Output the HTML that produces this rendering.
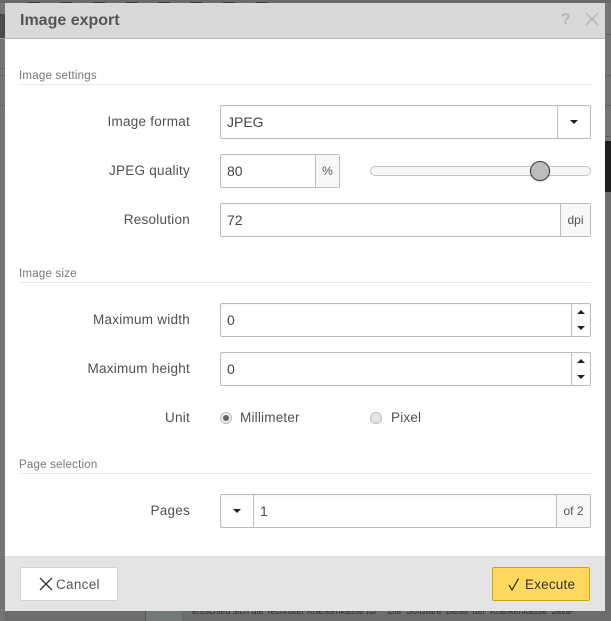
<!DOCTYPE html>
<html><head><meta charset="utf-8"><style>
html,body{margin:0;padding:0}
body{width:611px;height:621px;overflow:hidden;position:relative;background:#6b6d6c;font-family:"Liberation Sans",sans-serif;color:#4a4a4a;font-size:13.5px}
.a{position:absolute}
.t{position:absolute;white-space:nowrap;line-height:16px;letter-spacing:.2px}
.lab{position:absolute;right:421px;white-space:nowrap;line-height:16px;color:#505050;font-size:13.5px;letter-spacing:.25px}
.sec{position:absolute;left:19px;width:572px;height:16px;border-bottom:1px solid #e8e8e8;color:#777;font-size:11.5px;line-height:16px;letter-spacing:.22px}
.f{position:absolute;box-sizing:border-box;border:1px solid #bdbdbd;border-radius:2px;height:34px;background:#fff;box-shadow:inset 0 1px 2px rgba(0,0,0,.05)}
.s{position:absolute;top:0;bottom:0;width:0;border-left:1px solid #bdbdbd}
.add{position:absolute;top:0;bottom:0;background:#f7f7f7;border-left:1px solid #bdbdbd;color:#555;font-size:12px;line-height:32px;text-align:center}
.v{position:absolute;left:6px;top:8px;line-height:16px;color:#444;font-size:14px}
.dn{position:absolute;width:0;height:0;border-left:4px solid transparent;border-right:4px solid transparent;border-top:4px solid #222}
.up{position:absolute;width:0;height:0;border-left:4px solid transparent;border-right:4px solid transparent;border-bottom:4px solid #222}
</style></head><body>
<div class="a" style="left:0;top:0;width:611px;height:3px;background:#6a6a6a"></div>
<div class="a" style="left:28px;top:2px;width:245px;height:1px;background:repeating-linear-gradient(90deg,#3a3a3a 0 12px,transparent 12px 32.5px)"></div>
<div class="a" style="left:0;top:3px;width:5px;height:11px;background:#757575"></div>
<div class="a" style="left:0;top:14px;width:5px;height:24px;background:#4b4b4b"></div>
<div class="a" style="left:0;top:38px;width:5px;height:583px;background:#757575"></div>
<div class="a" style="left:0;top:38px;width:5px;height:1px;background:#9a9a9a"></div>
<div class="a" style="left:0;top:68px;width:5px;height:1px;background:#5f5f5f"></div>
<div class="a" style="left:0;top:75px;width:5px;height:1px;background:#5f5f5f"></div>
<div class="a" style="left:0;top:105px;width:5px;height:1px;background:#5f5f5f"></div>
<div class="a" style="left:605px;top:3px;width:6px;height:138px;background:#757575"></div>
<div class="a" style="left:605px;top:34px;width:6px;height:1px;background:#606060"></div>
<div class="a" style="left:605px;top:75px;width:6px;height:1px;background:#606060"></div>
<div class="a" style="left:605px;top:105px;width:6px;height:1px;background:#606060"></div>
<div class="a" style="left:605px;top:136px;width:6px;height:1px;background:#606060"></div>
<div class="a" style="left:605px;top:141px;width:6px;height:51px;background:#1d1e20"></div>
<div class="a" style="left:605px;top:192px;width:6px;height:429px;background:#6c6e6d"></div>
<div class="a" style="left:145px;top:605px;width:37px;height:16px;background:#747a79;border-left:1px solid #555;box-sizing:border-box"></div>
<div class="t" style="left:192px;top:605px;font-size:9px;color:#2c2c2c;line-height:12px;letter-spacing:0">entschied sich die Techniker Krankenkasse für</div>
<div class="t" style="left:388px;top:605px;font-size:9px;color:#2c2c2c;line-height:12px;letter-spacing:0;word-spacing:2px">Die Software bietet der Krankenkasse Java-</div>

<div class="a" style="left:5px;top:3px;width:600px;height:608px;background:#fff;overflow:hidden">
  <div class="a" style="left:0;top:0;width:600px;height:35px;background:#d9d9d9;border-bottom:1px solid #b9b9b9"></div>
  <div class="t" style="left:15px;top:10px;font-size:16px;font-weight:bold;color:#555;letter-spacing:0">Image export</div>
  <div class="t" style="left:556px;top:9px;font-size:16px;font-weight:bold;color:#b5b5b5;letter-spacing:0">?</div>
  <svg class="a" style="left:579px;top:8px" width="16" height="16" viewBox="0 0 16 16"><path d="M2 2L14 14M14 2L2 14" stroke="#b5b5b5" stroke-width="1.3" fill="none"/></svg>
  <div class="a" style="left:0;top:553px;width:600px;height:55px;background:#e4e4e4;border-top:1px solid #dcdcdc;box-sizing:border-box"></div>
</div>

<div class="sec" style="top:68px">Image settings</div>
<div class="sec" style="top:266px">Image size</div>
<div class="sec" style="top:457px">Page selection</div>

<div class="lab" style="top:114px">Image format</div>
<div class="f" style="left:220px;top:105px;width:371px"><div class="v">JPEG</div><div class="s" style="left:336px"></div><div class="dn" style="left:349px;top:14px"></div></div>

<div class="lab" style="top:163px">JPEG quality</div>
<div class="f" style="left:220px;top:154px;width:120px"><div class="v">80</div><div class="add" style="left:94px;right:0">%</div></div>
<div class="a" style="left:370px;top:166px;width:221px;height:10px;box-sizing:border-box;border:1px solid #c4c4c4;border-radius:5px;background:#f7f7f7"></div>
<div class="a" style="left:530px;top:161px;width:20px;height:20px;box-sizing:border-box;border:1px solid #3a3a3a;border-radius:50%;background:#bdbdbd;box-shadow:0 1px 2px rgba(0,0,0,.15)"></div>

<div class="lab" style="top:212px">Resolution</div>
<div class="f" style="left:220px;top:203px;width:371px"><div class="v">72</div><div class="add" style="left:339px;right:0">dpi</div></div>

<div class="lab" style="top:312px">Maximum width</div>
<div class="f" style="left:220px;top:303px;width:371px"><div class="v">0</div><div class="s" style="left:350px"></div><div class="up" style="left:356px;top:6px"></div><div class="dn" style="left:356px;top:22px"></div></div>

<div class="lab" style="top:361px">Maximum height</div>
<div class="f" style="left:220px;top:352px;width:371px"><div class="v">0</div><div class="s" style="left:350px"></div><div class="up" style="left:356px;top:6px"></div><div class="dn" style="left:356px;top:22px"></div></div>

<div class="lab" style="top:410px">Unit</div>
<div class="a" style="left:220px;top:412px;width:12px;height:12px;box-sizing:border-box;border:1px solid #bbb;border-radius:50%;background:#eee"></div>
<div class="a" style="left:223px;top:415px;width:6px;height:6px;border-radius:50%;background:#666"></div>
<div class="t" style="left:240px;top:410px;color:#505050">Millimeter</div>
<div class="a" style="left:370px;top:412px;width:12px;height:12px;box-sizing:border-box;border:1px solid #bbb;border-radius:50%;background:#e6e6e6"></div>
<div class="t" style="left:391px;top:410px;color:#505050">Pixel</div>

<div class="lab" style="top:503px">Pages</div>
<div class="f" style="left:220px;top:494px;width:371px"><div class="s" style="left:32px"></div><div class="dn" style="left:12px;top:14px"></div><div class="v" style="left:39px">1</div><div class="add" style="left:335px;right:0">of 2</div></div>

<div class="a" style="left:20px;top:567px;width:98px;height:34px;box-sizing:border-box;background:#fff;border:1px solid #d2d2d2;border-radius:2px"></div>
<svg class="a" style="left:39px;top:577px" width="14" height="14" viewBox="0 0 14 14"><path d="M1 1L13 13M13 1L1 13" stroke="#333" stroke-width="1.3" fill="none"/></svg>
<div class="t" style="left:56px;top:577px;color:#555;letter-spacing:.3px">Cancel</div>

<div class="a" style="left:492px;top:567px;width:98px;height:34px;box-sizing:border-box;background:#ffd95f;border:1px solid #cfa21a;border-radius:2px"></div>
<svg class="a" style="left:508px;top:577px" width="12" height="14" viewBox="0 0 12 14"><path d="M1 8L4 13L10.5 1.5" stroke="#222" stroke-width="1.2" fill="none"/></svg>
<div class="t" style="left:525px;top:577px;color:#333">Execute</div>
</body></html>
